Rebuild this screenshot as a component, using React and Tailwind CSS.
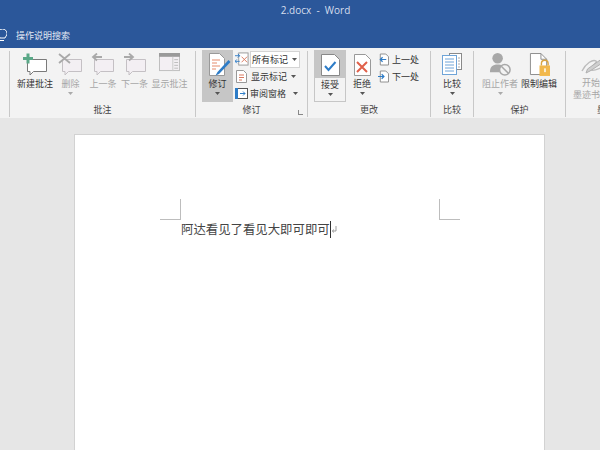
const CJK = { fontFamily: '"Noto Sans CJK SC","Noto Sans",sans-serif' };

const Caret = ({ c = "#555" }) => (
  <svg width="5" height="3" viewBox="0 0 5 3" className="block"><path d="M0 0h5L2.500 3z" fill={c} /></svg>
);

const Bubble = ({ dim }) => (
  <path d="M3.500 6.500h19v12h-13l-3.500 3.500v-3.500h-2.500z" fill={dim ? "#f3eff3" : "#fff"} stroke={dim ? "#c4c0c4" : "#7a7a7a"} strokeWidth="1" />
);

const NewIcon = () => (
  <svg width="25" height="22" viewBox="0 0 25 22"><g transform="translate(1 0)"><Bubble /></g><path d="M0 4h3.500V0.500h3V4H10v3H6.500v3.500h-3V7H0z" fill="#5aa887" /></svg>
);
const DelIcon = () => (
  <svg width="25" height="22" viewBox="0 0 25 22"><g transform="translate(1 0)"><Bubble dim /></g><path d="M1 1l11 9M12 1L1 10" stroke="#a9a9a9" strokeWidth="1.800" fill="none" /></svg>
);
const PrevIcon = () => (
  <svg width="24" height="22" viewBox="0 0 24 22"><Bubble dim /><path d="M11 4H2M6 0.500L2 4l4 3.500" stroke="#a9a9a9" strokeWidth="1.800" fill="none" /></svg>
);
const NextIcon = () => (
  <svg width="24" height="22" viewBox="0 0 24 22"><Bubble dim /><path d="M1 4h9M6 0.500L10 4 6 7.500" stroke="#a9a9a9" strokeWidth="1.800" fill="none" /></svg>
);
const ShowIcon = () => (
  <svg width="21" height="19" viewBox="0 0 22 20"><rect x="0.500" y="0.500" width="21" height="18" fill="#f3eff3" stroke="#bdbdbd" /><rect x="0" y="0" width="22" height="4" fill="#9a9a9a" /><path d="M14.500 4v15" stroke="#c8c8c8" /><path d="M16 7h4M16 10h4M16 13h4M16 16h4" stroke="#bcbcbc" /></svg>
);
const TrackIcon = () => (
  <svg width="22" height="23" viewBox="0 0 22 23">
    <path d="M0.500 0.500h10l5 5v17h-15z" fill="#fff" stroke="#999" />
    <path d="M3 7h8M3 10h5M3 13h8M3 16h4" stroke="#e58a6a" />
    <path d="M19.500 7l-11 12-2 3.500 3.500-1.500 11.500-12z" fill="#2d7cc7" />
  </svg>
);
const AcceptIcon = () => (
  <svg width="19" height="22" viewBox="0 0 19 22"><path d="M0.500 0.500h13l5 5v16h-18z" fill="#fff" stroke="#888" /><path d="M4 12l3.500 4L14.500 8" stroke="#2d7cc7" strokeWidth="2" fill="none" /></svg>
);
const RejectIcon = () => (
  <svg width="17" height="22" viewBox="0 0 17 22"><path d="M0.500 0.500h11l5 5v16h-16z" fill="#fff" stroke="#999" /><path d="M3 8l10 10M13 8L3 18" stroke="#e0604a" strokeWidth="2" fill="none" /></svg>
);
const SmallDoc = ({ flip }) => (
  <svg width="11" height="13" viewBox="0 0 12 13">
    <path d="M2.500 0.500h6l3 3v9h-9z" fill="#fff" stroke="#888" />
    {flip ? <path d="M0 6.500h6M4 4l2.500 2.500L4 9" stroke="#2d7cc7" strokeWidth="1.300" fill="none" /> : <path d="M9 6.500H3M5 4L2.500 6.500 5 9" stroke="#2d7cc7" strokeWidth="1.300" fill="none" />}
  </svg>
);
const CompareIcon = () => (
  <svg width="20" height="22" viewBox="0 0 20 22">
    <rect x="7.500" y="0.500" width="12" height="16" fill="#fff" stroke="#8a8a8a" />
    <rect x="0.500" y="2.500" width="14" height="19" fill="#fff" stroke="#6ea4d8" />
    <path d="M3 6h9M3 9h9M3 12h9M3 15h9M3 18h9" stroke="#6ea4d8" />
    <path d="M16 5h2M16 8h2M16 11h2M16 14h2" stroke="#aaa" />
  </svg>
);
const BlockIcon = () => (
  <svg width="23" height="23" viewBox="0 0 24 24">
    <circle cx="9" cy="5.500" r="5.500" fill="#a8a8a8" />
    <path d="M1 20c0-6 3-8 8-8 2 0 4 .5 5 1.500-2 1.500-3 4-3 6.500z" fill="#a8a8a8" />
    <circle cx="16.500" cy="17.500" r="5.500" fill="#f3f3f3" stroke="#a8a8a8" strokeWidth="1.600" />
    <path d="M12.800 13.800l7.400 7.400" stroke="#a8a8a8" strokeWidth="1.600" />
  </svg>
);
const LockIcon = () => (
  <svg width="21" height="23" viewBox="0 0 22 24">
    <path d="M1.500 0.500h11l6 6v16h-17z" fill="#fff" stroke="#8a8a8a" />
    <path d="M12.500 .5v6h6" fill="none" stroke="#8a8a8a" />
    <path d="M13 13v-2a3.500 3.500 0 017 0v2" stroke="#d9a441" strokeWidth="1.500" fill="none" />
    <rect x="11" y="13" width="11" height="11" fill="#f2b84b" />
    <rect x="16" y="16" width="1.500" height="4" fill="#fff" />
  </svg>
);
const InkIcon = () => (
  <svg width="28" height="16" viewBox="0 0 28 16">
    <path d="M1 13C5 5 12 1 15 3c2 2-7 6-5 9 2 1.500 7-1 12-3" stroke="#bcbcbc" strokeWidth="1.400" fill="none" />
    <path d="M22 0l3 2.500L9 13l-4 2 1.500-4z" fill="#cfcfcf" stroke="#b0b0b0" />
  </svg>
);
const MarkupIcon = () => (
  <svg width="14" height="14" viewBox="0 0 15 15">
    <rect x="4" y="1" width="10" height="13" fill="#fff" stroke="#999" />
    <path d="M0 4h5M3 2l2 2-2 2" stroke="#2d7cc7" fill="none" />
    <path d="M0 10h5M2 8l-2 2 2 2" stroke="#2d7cc7" fill="none" />
    <path d="M7 5l6 6M13 5l-6 6" stroke="#d9785f" />
  </svg>
);
const ShowMarkIcon = () => (
  <svg width="11" height="13" viewBox="0 0 11 13"><path d="M0.500 0.500h7l3 3v9h-10z" fill="#fff" stroke="#999" /><path d="M3 5h5M3 7.500h5M3 10h3" stroke="#d9785f" /></svg>
);
const PaneIcon = () => (
  <svg width="13" height="11" viewBox="0 0 13 11"><rect x="0.500" y="0.500" width="12" height="10" fill="#fff" stroke="#555" /><rect x="0" y="0" width="3" height="11" fill="#2d7cc7" /><path d="M5 5.500h5M8 3.500l2 2-2 2" stroke="#2d7cc7" fill="none" /></svg>
);

const Btn = ({ w, icon, label, dim, caret }) => (
  <div className="flex flex-col items-center shrink-0" style={{ width: w }}>
    <div className="flex items-start justify-center h-[23px] pt-[1px]">{icon}</div>
    <div className={`text-[9px] leading-[13px] mt-[2px] whitespace-nowrap ${dim ? "text-[#a6a6a6]" : "text-[#333]"}`}>{label}</div>
    {caret && <div className="mt-[2px]"><Caret c={dim ? "#aaa" : "#555"} /></div>}
  </div>
);

const Group = ({ w, label, children, extra }) => (
  <div className="relative flex flex-col shrink-0 border-r border-[#c8c8c8] my-[3px] h-[66px]" style={{ width: w }}>
    <div className="flex flex-1 items-start pt-[1px]">{children}</div>
    <div className="text-[9px] leading-[12px] text-[#444] text-center h-[13px]">{label}</div>
    {extra}
  </div>
);

export default function App() {
  return (
    <div className="w-[600px] h-[450px] overflow-hidden bg-[#e6e6e6] flex flex-col" style={CJK}>
      <div className="h-[48px] shrink-0 bg-[#2b579a] flex flex-col">
        <div className="h-[24px] flex items-center justify-center pl-[31px] pb-[3px] text-[10px] text-[#d5deed] whitespace-pre" style={{ fontFamily: '"Open Sans",sans-serif' }}>2.docx  -  Word</div>
        <div className="flex items-center h-[24px] pb-[1px] gap-[9px] text-[9px] text-[#e3e9f3]">
          <svg width="7" height="13" viewBox="0 0 7 13" className="shrink-0"><path d="M-2 4.500a4.500 4.500 0 019 0c0 2-1.500 3-2 4.500H0C-.5 7.500-2 6.500-2 4.500zM0 11.500h4" stroke="#fff" fill="none" /></svg>
          <span>操作说明搜索</span>
        </div>
      </div>
      <div className="h-[70px] shrink-0 bg-[#f3f3f3] flex overflow-hidden">
        <Group w={10} label="" />
        <Group w={186} label="批注">
          <div className="flex pl-[6px]">
            <Btn w={38} icon={<NewIcon />} label="新建批注" />
            <Btn w={33} icon={<DelIcon />} label="删除" dim caret />
            <Btn w={32} icon={<PrevIcon />} label="上一条" dim />
            <Btn w={31} icon={<NextIcon />} label="下一条" dim />
            <Btn w={39} icon={<ShowIcon />} label="显示批注" dim />
          </div>
        </Group>
        <Group w={112} label="修订" extra={<div className="absolute right-[4px] bottom-[2px] w-[5px] h-[5px] border-l border-b border-[#888]" />}>
          <div className="flex pl-[6px] -mt-[2px]">
            <div className="w-[31px] h-[52px] bg-[#c6c6c6] flex flex-col items-center pt-[3px] pl-[4px] shrink-0">
              <TrackIcon />
              <div className="text-[9px] leading-[13px] text-[#333] -ml-[4px] mt-[1px]">修订</div>
              <div className="mt-[2px] -ml-[4px]"><Caret /></div>
            </div>
            <div className="flex flex-col pl-[2px] w-[68px] text-[9px] text-[#333]">
              <div className="flex items-center h-[18px] gap-[1px]">
                <MarkupIcon />
                <div className="w-[50px] h-[17px] bg-white border border-[#d4d4d4] flex items-center justify-between pl-[1px] pr-[2px]">
                  <span className="leading-[13px]">所有标记</span><Caret />
                </div>
              </div>
              <div className="flex items-center h-[17px] gap-[4px] pl-[1px]">
                <ShowMarkIcon /><span className="leading-[13px]">显示标记</span><Caret />
              </div>
              <div className="flex items-center h-[17px] gap-[2px]">
                <PaneIcon /><span className="leading-[13px] mr-[5px]">审阅窗格</span><Caret />
              </div>
            </div>
          </div>
        </Group>
        <Group w={123} label="更改">
          <div className="flex pl-[6px] -mt-[2px]">
            <div className="w-[32px] h-[52px] flex flex-col items-center shrink-0 border border-[#c6c6c6]">
              <div className="w-full h-[27px] bg-[#c6c6c6] flex justify-center pt-[3px] overflow-hidden shrink-0"><AcceptIcon /></div>
              <div className="text-[9px] leading-[13px] text-[#333]">接受</div>
              <div className="mt-[2px]"><Caret /></div>
            </div>
            <div className="w-[32px] flex flex-col items-center shrink-0 pt-[4px]">
              <RejectIcon />
              <div className="text-[9px] leading-[13px] text-[#333] mt-[1px]">拒绝</div>
              <div className="mt-[2px]"><Caret /></div>
            </div>
            <div className="flex flex-col text-[9px] text-[#333]">
              <div className="flex items-center h-[17px] mt-[1px] gap-[3px]"><SmallDoc /><span className="leading-[13px]">上一处</span></div>
              <div className="flex items-center h-[17px] gap-[3px]"><SmallDoc flip /><span className="leading-[13px]">下一处</span></div>
            </div>
          </div>
        </Group>
        <Group w={43} label="比较">
          <Btn w={42} icon={<CompareIcon />} label="比较" caret />
        </Group>
        <Group w={92} label="保护">
          <div className="flex pl-[6px]">
            <Btn w={40} icon={<BlockIcon />} label="阻止作者" dim caret />
            <Btn w={38} icon={<LockIcon />} label="限制编辑" />
          </div>
        </Group>
        <div className="flex flex-col w-[60px] shrink-0 pt-[10px] text-[9px] leading-[12px] text-[#a6a6a6]">
          <div className="pl-[15px]"><InkIcon /></div>
          <div className="mt-[3px] pl-[16px]">开始</div>
          <div className="whitespace-nowrap pl-[7px]">墨迹书写</div>
          <div className="pl-[31px] text-[#444] mt-[3px] leading-[12px]">墨迹</div>
        </div>
      </div>
      <div className="flex-1 pt-[16px] pl-[74px] overflow-hidden">
        <div className="w-[471px] h-[400px] bg-white border border-[#d2d2d2] relative">
          <div className="absolute left-[85px] top-[64px] w-[21px] h-[21px] border-r border-b border-[#bdbdbd]" />
          <div className="absolute left-[364px] top-[64px] w-[21px] h-[21px] border-l border-b border-[#bdbdbd]" />
          <div className="absolute left-[106px] top-[84px] h-[20px] flex items-center text-[12.4px] text-[#444] whitespace-nowrap">
            阿达看见了看见大即可即可
            <span className="w-px h-[17px] bg-[#333]" />
            <svg width="6" height="8" viewBox="0 0 5 8" className="mt-[1px]"><path d="M4.500 0v5H1M2.500 3.500L.8 5l1.700 1.500" stroke="#888" fill="none" strokeWidth=".8" /></svg>
          </div>
        </div>
      </div>
    </div>
  );
}
